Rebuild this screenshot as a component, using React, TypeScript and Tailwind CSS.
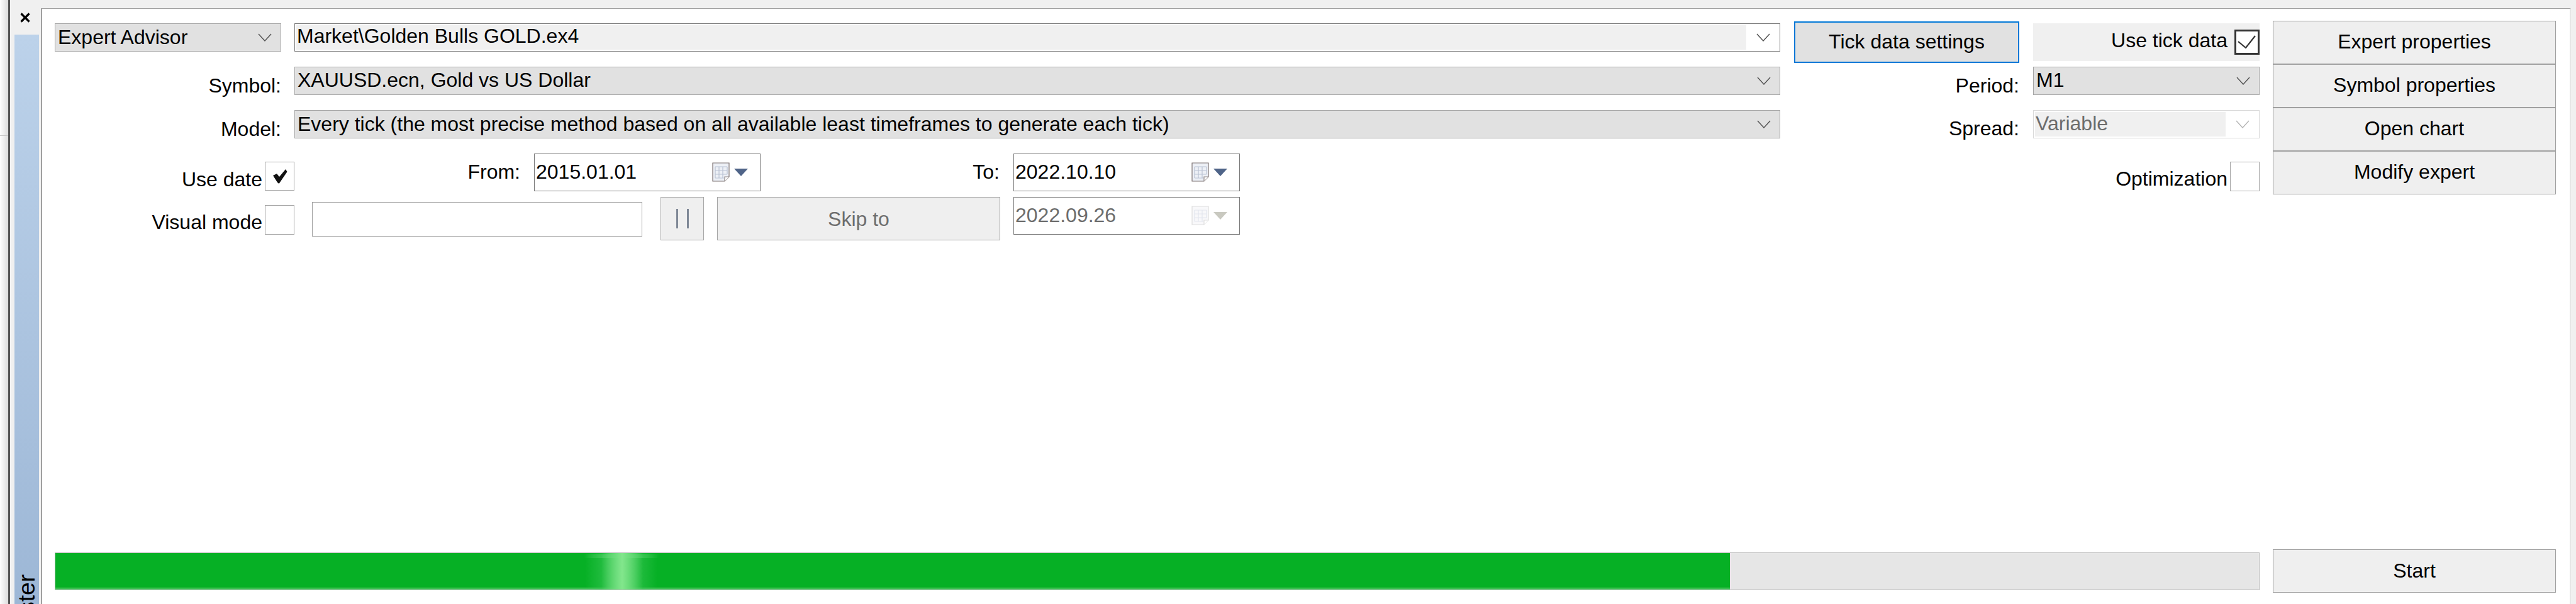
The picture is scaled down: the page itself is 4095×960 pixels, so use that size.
import React from "react";

const Chevron = ({ disabled = false }: { disabled?: boolean }) => (
  <svg width="22" height="13" viewBox="0 0 22 13" className="shrink-0" fill="none">
    <path d="M1 1L11 12L21 1" stroke={disabled ? "#b5b5b5" : "#505050"} strokeWidth="1.4" />
  </svg>
);

const Combo = ({
  text,
  kind = "gray",
  w,
  pad,
}: {
  text: string;
  kind?: "gray" | "focus" | "disabled";
  w: string;
  pad: string;
}) => {
  if (kind === "focus") {
    return (
      <div className={`${w} mt-1 flex h-[45px] items-center border border-[#7a7a7a] bg-white`}>
        <div className={`ml-[2px] h-[39px] flex-1 bg-[#f0f0f0] pl-px leading-none text-black ${pad}`}>{text}</div>
        <div className="flex w-[53px] justify-center"><Chevron /></div>
      </div>
    );
  }
  if (kind === "disabled") {
    return (
      <div className={`${w} mt-1 flex h-[45px] items-center border border-[#d9d9d9] bg-white`}>
        <div className={`ml-[2px] h-[39px] flex-1 bg-[#f0f0f0] pl-[1px] leading-none text-[#6d6d6d] ${pad}`}>{text}</div>
        <div className="flex w-[53px] justify-center"><Chevron disabled /></div>
      </div>
    );
  }
  return (
    <div className={`${w} mt-1 flex h-[45px] items-center justify-between border border-[#a6a6a6] bg-[#e1e1e1] pl-[4px] pr-[14px] leading-none text-black`}>
      <span className={`h-full ${pad}`}>{text}</span>
      <Chevron />
    </div>
  );
};

const CalIcon = ({ disabled = false }: { disabled?: boolean }) => (
  <svg width="28" height="31" viewBox="0 0 28 31" className="shrink-0">
    <path d="M1 1H27V23L20 30H1Z" fill={disabled ? "#f8f8fa" : "#edf0f6"} stroke={disabled ? "#dedede" : "#7d7373"} strokeWidth="1.2" />
    <path d="M5 7H24M5 13H24M5 19H24M5 25H19M5 7V25M11 7V25M17 7V25M24 7V19" fill="none" stroke={disabled ? "#e3e6ee" : "#b9c2d3"} strokeWidth="1.2" />
    <path d="M20 30V23H27" fill="#ffffff" stroke={disabled ? "#dedede" : "#8f8888"} strokeWidth="1.2" />
  </svg>
);

const DateBox = ({ value, disabled = false }: { value: string; disabled?: boolean }) => (
  <div className="flex h-[60px] w-[360px] items-start border border-[#7a7a7a] bg-white pl-[2px] pr-[19px]">
    <span className={`flex-1 pt-[12px] leading-none ${disabled ? "text-[#6d6d6d]" : "text-black"}`}>{value}</span>
    <div className="mt-[13px]"><CalIcon disabled={disabled} /></div>
    <svg width="22" height="12" viewBox="0 0 22 12" className="ml-[7px] mt-[23px]">
      <path d="M0 0H22L11 12Z" fill={disabled ? "#c9c9c0" : "#4f6488"} />
    </svg>
  </div>
);

const Check = ({ className, children }: { className: string; children?: React.ReactNode }) => (
  <div className={`flex shrink-0 items-center justify-center border border-[#a6a6a6] bg-white ${className}`}>{children}</div>
);

const SideBtn = ({ text, pad = "pt-[16px]" }: { text: string; pad?: string }) => (
  <div className={`h-[69px] w-[450px] border border-[#a0a0a0] bg-[#efefef] text-center leading-none text-black ${pad}`}>
    {text}
  </div>
);

const Label = ({ text, className }: { text: string; className: string }) => (
  <div className={`text-right leading-none text-black ${className}`}>{text}</div>
);

export default function App() {
  return (
    <div className="flex h-[960px] w-[4095px] overflow-hidden bg-[#f0f0f0] font-['Liberation_Sans',Arial,sans-serif] text-[32px]">
      <div className="flex h-full w-[13px] flex-col bg-gradient-to-r from-white to-[#dcdcdc]">
        <div className="h-[215px]"></div>
        <div className="h-px bg-[#c8c8c8]"></div>
      </div>
      <div className="h-full w-[3px] bg-[#555555]"></div>

      <div className="flex h-full w-[49px] flex-col px-[7px]">
        <div className="flex h-[55px] w-[39px] items-center justify-center pr-[6px]">
          <svg width="16" height="16" viewBox="0 0 16 16">
            <path d="M1.5 1.5L14.5 14.5M14.5 1.5L1.5 14.5" stroke="#000" strokeWidth="3.2" />
          </svg>
        </div>
        <div className="relative w-[39px] flex-1 overflow-hidden bg-gradient-to-b from-[#bcd2ea] to-[#9db7d6]">
          <span className="absolute left-px top-[858px] text-[37px] leading-none text-black [transform-origin:0_0] [transform:rotate(-90deg)_translateX(-100%)]">
            Tester
          </span>
        </div>
      </div>

      <div className="mt-[13px] flex h-[947px] w-[4022px] flex-col justify-between border-l-2 border-r-2 border-t border-l-[#a0a0a0] border-r-[#e6e6e6] border-t-[#a0a0a0] bg-white pb-[18px] pl-[20px] pr-[22px] pt-[19px]">
        <div className="flex items-start gap-[21px]">
          <div className="flex w-[3505px] flex-col">
            <div className="grid grid-cols-[381px_2384px_380px_360px] grid-rows-[69px_69px_69px]">
              <Combo text="Expert Advisor" w="w-[360px]" pad="pt-[5px]" />
              <Combo text="Market\Golden Bulls GOLD.ex4" kind="focus" w="w-[2362px]" pad="pt-[1px]" />
              <div className="mt-px h-[66px] w-[358px] border-2 border-[#0078d7] bg-[#e1e1e1] pt-[14px] text-center leading-none text-black">
                Tick data settings
              </div>
              <div className="mt-1 flex h-[60px] w-[360px] items-start justify-end bg-[#f0f0f0]">
                <span className="mr-[11px] pt-[11px] leading-none text-black">Use tick data</span>
                <div className="mt-[10px] flex h-[40px] w-[40px] items-center justify-center border-[3px] border-[#333333] bg-white">
                  <svg width="30" height="22" viewBox="0 0 30 22" fill="none">
                    <path d="M1 10L13 20L28 1" stroke="#333333" strokeWidth="2.2" />
                  </svg>
                </div>
              </div>

              <Label text="Symbol:" className="mr-[21px] mt-[18px]" />
              <Combo text="XAUUSD.ecn, Gold vs US Dollar" w="w-[2362px]" pad="pt-[4px]" />
              <Label text="Period:" className="mr-[22px] mt-[18px]" />
              <Combo text="M1" w="w-[360px]" pad="pt-[4px]" />

              <Label text="Model:" className="mr-[21px] mt-[18px]" />
              <Combo text="Every tick (the most precise method based on all available least timeframes to generate each tick)" w="w-[2362px]" pad="pt-[5px]" />
              <Label text="Spread:" className="mr-[22px] mt-[17px]" />
              <Combo text="Variable" kind="disabled" w="w-[360px]" pad="pt-[2px]" />
            </div>

            <div className="flex h-[73px] items-start">
              <div className="mt-[17px] flex h-[46px] w-[381px] items-start justify-end gap-[4px]">
                <span className="mt-[12px] leading-none text-black">Use date</span>
                <Check className="h-[46px] w-[47px]">
                  <svg width="24" height="23" viewBox="0 0 24 23">
                    <path d="M1 10L7 7L11 12L21 0L23.5 4L10.5 23L8 21Z" fill="#111" />
                  </svg>
                </Check>
              </div>
              <div className="mt-[17px] w-[359px] text-right leading-none text-black">From:</div>
              <div className="ml-[22px] mt-[4px]"><DateBox value="2015.01.01" /></div>
              <div className="mt-[17px] w-[380px] text-right leading-none text-black">To:</div>
              <div className="ml-[22px] mt-[4px]"><DateBox value="2022.10.10" /></div>
              <div className="mt-[17px] flex h-[47px] flex-1 items-start justify-end gap-[4px]">
                <span className="mt-[11px] leading-none text-black">Optimization</span>
                <Check className="h-[47px] w-[47px]" />
              </div>
            </div>

            <div className="flex items-start">
              <div className="mt-[13px] flex h-[47px] w-[381px] items-start justify-end gap-[4px]">
                <span className="mt-[11px] leading-none text-black">Visual mode</span>
                <Check className="h-[47px] w-[47px]" />
              </div>
              <div className="ml-[28px] mt-[8px] h-[55px] w-[525px] border border-[#a0a0a0] bg-white"></div>
              <div className="ml-[29px] flex h-[69px] w-[69px] items-center justify-center gap-[14px] border border-[#a6a6a6] bg-[#efefef]">
                <div className="h-[31px] w-[3px] bg-[#7f8896]"></div>
                <div className="h-[31px] w-[3px] bg-[#7f8896]"></div>
              </div>
              <div className="ml-[21px] flex h-[69px] w-[450px] items-center justify-center border border-[#a6a6a6] bg-[#efefef] leading-none text-[#6d6d6d]">
                Skip to
              </div>
              <div className="ml-[21px]"><DateBox value="2022.09.26" disabled /></div>
            </div>
          </div>

          <div className="flex w-[450px] flex-col">
            <SideBtn text="Expert properties" />
            <SideBtn text="Symbol properties" />
            <SideBtn text="Open chart" />
            <SideBtn text="Modify expert" />
          </div>
        </div>

        <div className="flex items-center gap-[21px]">
          <div className="h-[60px] w-[3505px] overflow-hidden border border-[#bcbcbc] bg-[#e6e6e6]">
            <div className="relative h-full w-[2662px] overflow-hidden bg-[#06b025]">
              <div className="absolute bottom-0 left-0 right-0 h-[4px] bg-gradient-to-b from-[#06b025] to-[#4ccb66]"></div>
              <div className="absolute left-[840px] top-[2px] h-[6px] w-[120px] bg-gradient-to-r from-transparent via-[#7fe48a] to-transparent opacity-80"></div>
              <div className="absolute bottom-0 left-[842px] top-0 w-[115px] bg-gradient-to-r from-transparent via-[#3fc95a] to-transparent"></div>
              <div className="absolute bottom-0 left-[868px] top-0 w-[66px] bg-gradient-to-r from-transparent via-[#82e68c] to-transparent"></div>
            </div>
          </div>
          <SideBtn text="Start" pad="pt-[17px]" />
        </div>
      </div>

      <div className="h-full flex-1 bg-[#f0f0f0]"></div>
    </div>
  );
}
